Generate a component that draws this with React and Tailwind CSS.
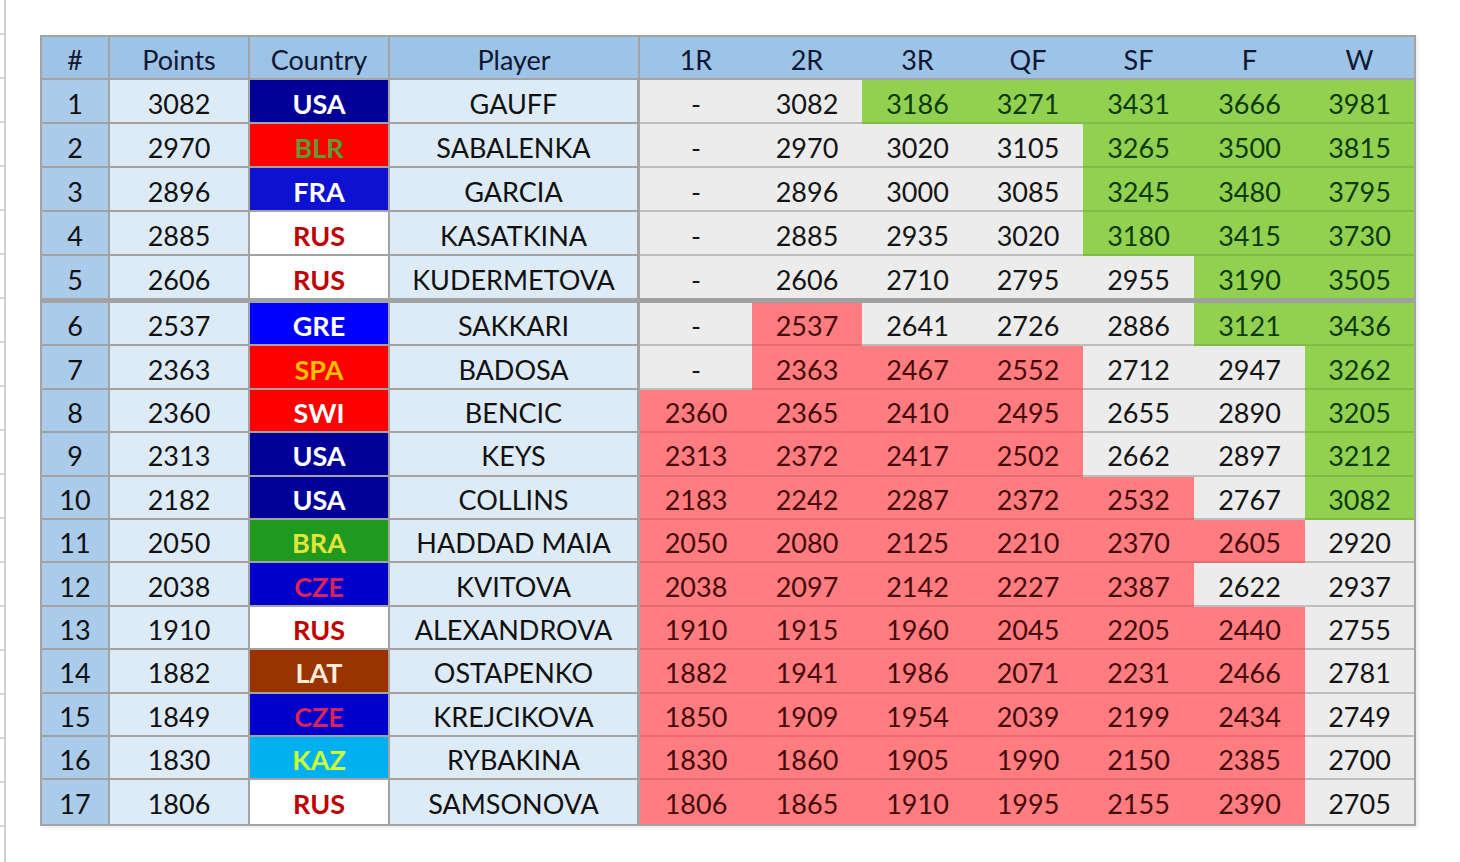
import React from "react";

const rows = [
  [1, "3082", "USA", "GAUFF", ["-", "3082", "3186", "3271", "3431", "3666", "3981"], "ggGGGGG"],
  [2, "2970", "BLR", "SABALENKA", ["-", "2970", "3020", "3105", "3265", "3500", "3815"], "ggggGGG"],
  [3, "2896", "FRA", "GARCIA", ["-", "2896", "3000", "3085", "3245", "3480", "3795"], "ggggGGG"],
  [4, "2885", "RUS", "KASATKINA", ["-", "2885", "2935", "3020", "3180", "3415", "3730"], "ggggGGG"],
  [5, "2606", "RUS", "KUDERMETOVA", ["-", "2606", "2710", "2795", "2955", "3190", "3505"], "gggggGG"],
  [6, "2537", "GRE", "SAKKARI", ["-", "2537", "2641", "2726", "2886", "3121", "3436"], "grgggGG"],
  [7, "2363", "SPA", "BADOSA", ["-", "2363", "2467", "2552", "2712", "2947", "3262"], "grrrggG"],
  [8, "2360", "SWI", "BENCIC", ["2360", "2365", "2410", "2495", "2655", "2890", "3205"], "rrrrggG"],
  [9, "2313", "USA", "KEYS", ["2313", "2372", "2417", "2502", "2662", "2897", "3212"], "rrrrggG"],
  [10, "2182", "USA", "COLLINS", ["2183", "2242", "2287", "2372", "2532", "2767", "3082"], "rrrrrgG"],
  [11, "2050", "BRA", "HADDAD MAIA", ["2050", "2080", "2125", "2210", "2370", "2605", "2920"], "rrrrrrg"],
  [12, "2038", "CZE", "KVITOVA", ["2038", "2097", "2142", "2227", "2387", "2622", "2937"], "rrrrrgg"],
  [13, "1910", "RUS", "ALEXANDROVA", ["1910", "1915", "1960", "2045", "2205", "2440", "2755"], "rrrrrrg"],
  [14, "1882", "LAT", "OSTAPENKO", ["1882", "1941", "1986", "2071", "2231", "2466", "2781"], "rrrrrrg"],
  [15, "1849", "CZE", "KREJCIKOVA", ["1850", "1909", "1954", "2039", "2199", "2434", "2749"], "rrrrrrg"],
  [16, "1830", "KAZ", "RYBAKINA", ["1830", "1860", "1905", "1990", "2150", "2385", "2700"], "rrrrrrg"],
  [17, "1806", "RUS", "SAMSONOVA", ["1806", "1865", "1910", "1995", "2155", "2390", "2705"], "rrrrrrg"],
];

const countryStyle = {
  USA: "bg-[#000099] text-white",
  BLR: "bg-[#ff0000] text-[#5f9a3a]",
  FRA: "bg-[#0c12cf] text-white",
  RUS: "bg-white text-[#c00000]",
  GRE: "bg-[#0000ff] text-white",
  SPA: "bg-[#ff0000] text-[#ffc000]",
  SWI: "bg-[#ff0000] text-white",
  BRA: "bg-[#1f9a1f] text-[#e4e43c]",
  CZE: "bg-[#0000cc] text-[#d6245a]",
  LAT: "bg-[#993300] text-[#fbecd8]",
  KAZ: "bg-[#00b0f0] text-[#ccff33]",
};

const numStyle = {
  g: "bg-[#ececec] text-[#141414] border-[#bdbdbd]",
  r: "bg-[#ff7c80] text-[#450a0a] border-[#e46c70]",
  G: "bg-[#92d050] text-[#0d3a0d] border-[#80bb46]",
};

const headers = ["#", "Points", "Country", "Player", "1R", "2R", "3R", "QF", "SF", "F", "W"];

export default function App() {
  return (
    <div className="w-[1460px] h-[862px] bg-white flex font-['Lato','Open_Sans',sans-serif] overflow-hidden">
      <div className="w-[4px] h-full bg-[repeating-linear-gradient(to_bottom,transparent_0px,transparent_33px,#d4d4d4_33px,#d4d4d4_35px,transparent_35px,transparent_44px)]" />
      <div className="h-full border-l-2 border-[#d0d0d0] pl-[34px] pt-[35px]">
        <div className="w-[1376px] border-2 border-[#a3a3a3] shadow-[2px_2px_3px_rgba(0,0,0,0.08)] grid grid-cols-[68px_140px_140px_250px_112px_110px_111px_110px_111px_111px_109px] grid-rows-[43px_repeat(4,44px)_47px_repeat(12,43.4px)] text-[27px] leading-none">
          {headers.map((h, i) => (
            <div
              key={h}
              className={`flex items-center justify-center pt-[4px] bg-[#9dc3e6] text-[#0f1733] border-b-2 border-[#a3a3a3] ${i < 4 ? "border-r-2" : ""}`}
            >
              {h}
            </div>
          ))}
          {rows.map(([n, pts, c, name, vals, cols]) => {
            const sep = n === 5;
            const bb = n === 17 ? "" : sep ? "border-b-[5px]" : "border-b-2";
            const sepColor = sep ? "!border-[#a0a0a0]" : "";
            return (
              <React.Fragment key={n}>
                <div className={`flex items-center justify-center pt-[4px] bg-[#abcbea] text-[#111] border-r-2 border-[#a3a3a3] ${bb}`}>{n}</div>
                <div className={`flex items-center justify-center pt-[4px] bg-[#ddebf7] text-[#111] border-r-2 border-[#a3a3a3] ${bb}`}>{pts}</div>
                <div className={`flex items-center justify-center pt-[4px] font-bold border-r-2 border-[#a3a3a3] ${bb} ${countryStyle[c]}`}>{c}</div>
                <div className={`flex items-center justify-center pt-[4px] bg-[#ddebf7] text-[#111] border-r-[3px] border-[#a3a3a3] ${bb}`}>{name}</div>
                {vals.map((v, j) => (
                  <div
                    key={j}
                    className={`flex items-center justify-center pt-[4px] ${bb} ${numStyle[cols[j]]} ${sepColor}`}
                  >
                    {v}
                  </div>
                ))}
              </React.Fragment>
            );
          })}
        </div>
      </div>
    </div>
  );
}
